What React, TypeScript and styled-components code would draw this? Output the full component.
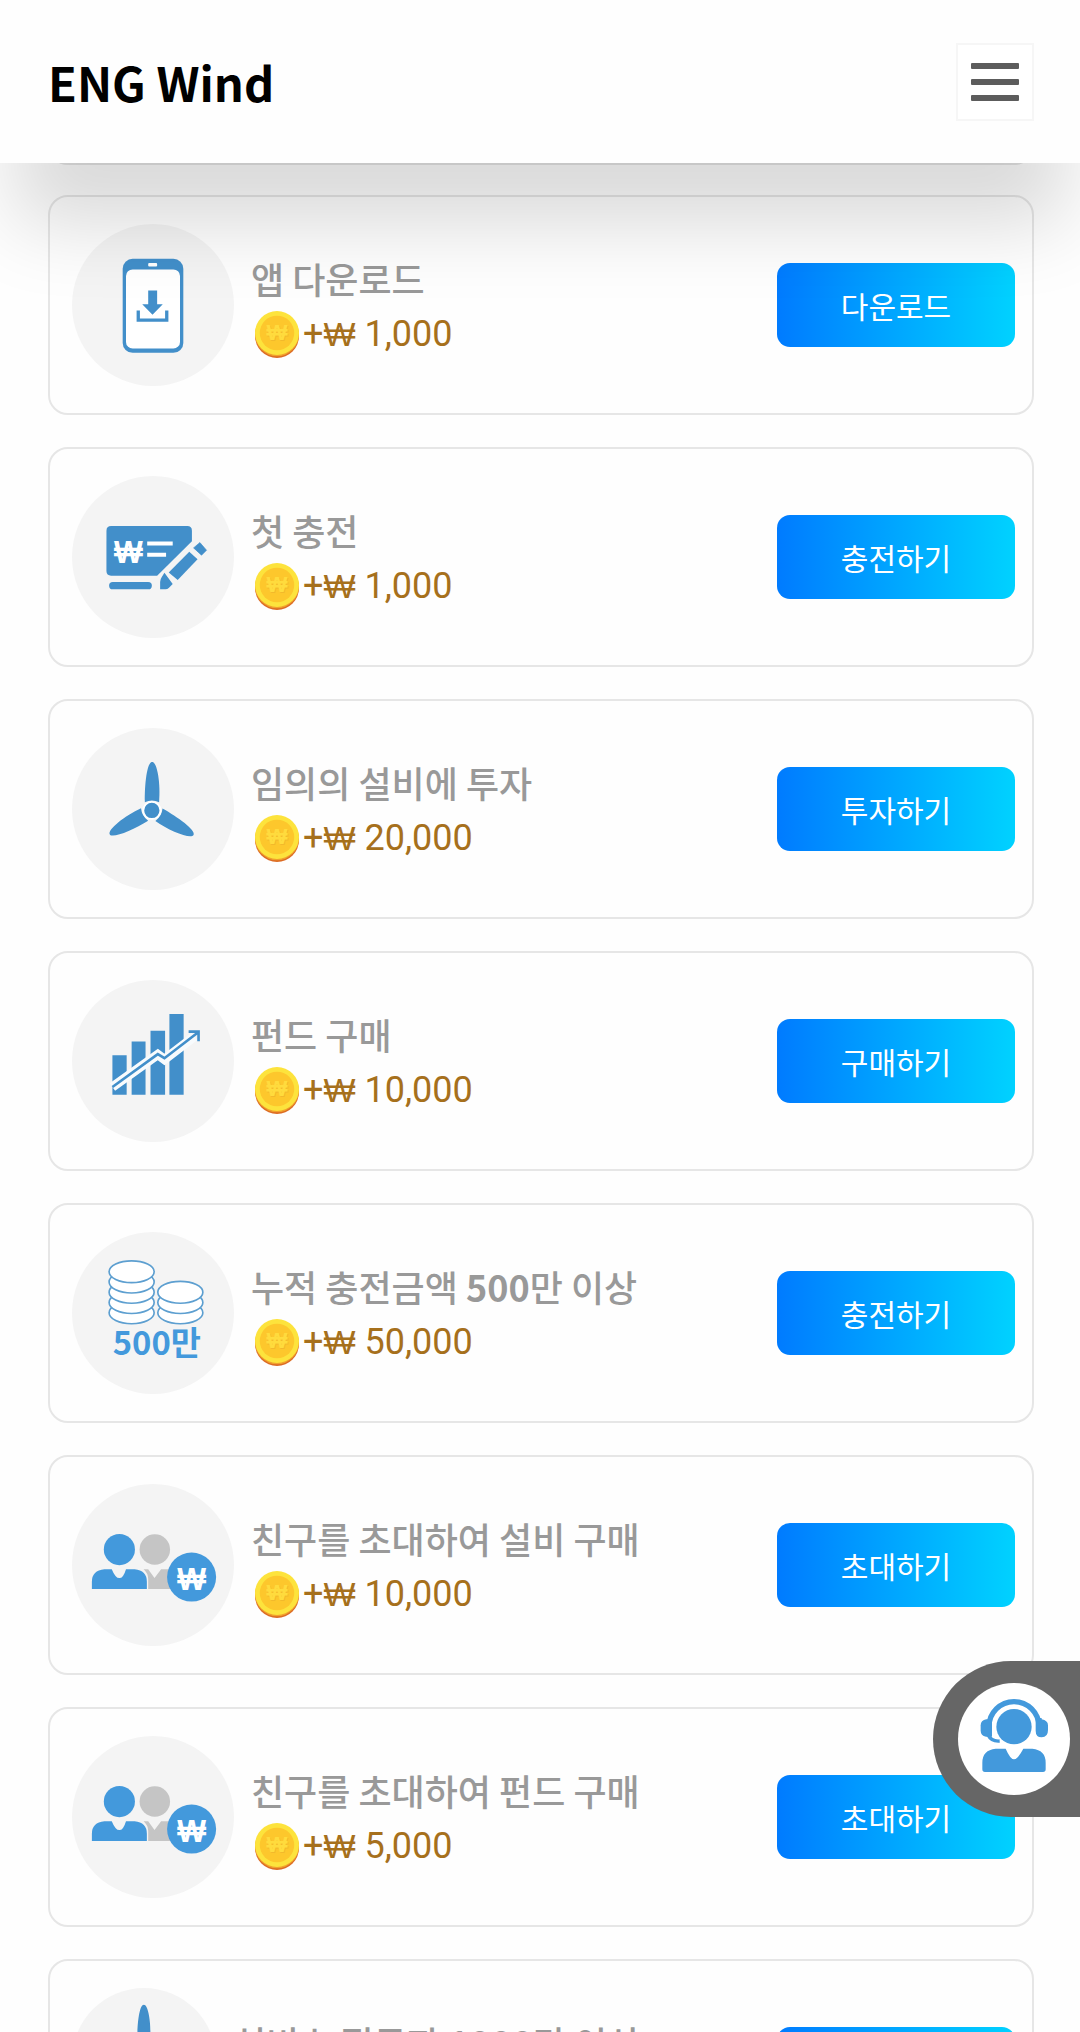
import React from "react";
import styled, { createGlobalStyle } from "styled-components";

const BLUE = "#428fca";
const SKY = "#4399dc";
const PALE = "#f4f4f4";
const kr = `"Noto Sans CJK KR", "Noto Sans", sans-serif`;

const GlobalStyle = createGlobalStyle`
  *, *::before, *::after { box-sizing: border-box; }
  body { margin: 0; background: #fefefe; font-family: ${kr}; }
`;

const Screen = styled.div`
  height: 100vh;
  overflow: hidden;
`;

const Header = styled.header`
  position: relative;
  z-index: 2;
  display: flex;
  align-items: center;
  justify-content: space-between;
  height: 163px;
  padding: 0 46px 0 48px;
  background: #fefefe;
  box-shadow: 0 75px 80px -15px rgba(0, 0, 0, 0.15);
`;

const Brand = styled.h1`
  margin: 0;
  font-size: 47px;
  line-height: 70px;
  font-weight: 700;
  color: #000;
`;

const MenuButton = styled.button`
  display: flex;
  flex-direction: column;
  align-items: center;
  justify-content: center;
  gap: 10px;
  width: 78px;
  height: 78px;
  padding: 0;
  border: 2px solid #f6f6f6;
  background: #fff;
`;

const MenuBar = styled.span`
  width: 48px;
  height: 6px;
  border-radius: 1px;
  background: #5c5c5c;
`;

const ScrolledEdge = styled.div`
  height: 42px;
  margin: -40px 46px 0 48px;
  border: 2px solid #e6e6e6;
  border-radius: 20px;
`;

const TaskList = styled.ul`
  display: flex;
  flex-direction: column;
  gap: 32px;
  margin: 0;
  padding: 30px 46px 32px 48px;
  list-style: none;
`;

const Card = styled.li`
  display: flex;
  align-items: center;
  justify-content: space-between;
  padding: 27px 17px 27px 22px;
  border: 2px solid #e6e6e6;
  border-radius: 20px;
`;

const Info = styled.div`
  display: flex;
  gap: 17px;
  height: 162px;
`;

const IconDisc = styled.svg<{ $small?: boolean }>`
  flex: none;
  width: ${(p) => (p.$small ? 144 : 162)}px;
  height: ${(p) => (p.$small ? 144 : 162)}px;
  border-radius: 50%;
  background: ${PALE};
`;

const Copy = styled.div`
  display: flex;
  flex-direction: column;
  justify-content: center;
`;

const Title = styled.h2`
  margin: 0;
  font-size: 36px;
  line-height: 58px;
  font-weight: 500;
  color: #999;
`;

const Figure = styled.span`
  font-weight: 700;
`;

const Reward = styled.p`
  display: flex;
  align-items: center;
  gap: 4px;
  height: 54px;
  margin: 0;
  padding-left: 4px;
  font-family: Roboto, sans-serif;
  font-size: 36px;
  line-height: 54px;
  color: #a6701c;
`;

const Won = styled.span`
  font-family: "Liberation Sans", sans-serif;
  font-size: 34px;
`;

const CoinArt = styled.svg`
  flex: none;
  width: 44px;
  height: 47px;
`;

const Action = styled.button`
  flex: none;
  width: 238px;
  height: 84px;
  padding: 0;
  border: 0;
  border-radius: 13px;
  background: linear-gradient(90deg, #007bff, #00d2ff);
  font-family: ${kr};
  font-size: 30px;
  line-height: 44px;
  color: #fff;
`;

const Support = styled.button`
  position: fixed;
  right: 0;
  bottom: 215px;
  z-index: 3;
  display: flex;
  align-items: center;
  width: 147px;
  height: 156px;
  padding: 0 0 0 25px;
  border: 0;
  border-radius: 78px 0 0 78px;
  background: #666;
`;

const SupportArt = styled.svg`
  width: 112px;
  height: 112px;
  border-radius: 50%;
  background: #fff;
`;

const WonMark = ({ x, y, size, fill }: { x: number; y: number; size: number; fill: string }) => (
  <text
    x={x}
    y={y}
    fontFamily='"Liberation Sans", sans-serif'
    fontWeight="700"
    fontSize={size}
    textAnchor="middle"
    fill={fill}
  >
    ₩
  </text>
);

const Coin = () => (
  <CoinArt viewBox="0 0 130 139" aria-hidden="true">
    <circle cx="65" cy="74" r="65" fill="#dc6c24" />
    <circle cx="65" cy="69" r="65" fill="#f0a02c" />
    <circle cx="65" cy="65" r="65" fill="#fde33c" />
    <circle cx="65" cy="65" r="51" fill="#fdc72c" />
    <WonMark x={67} y={90} size={66} fill="#f2b92b" />
    <WonMark x={65} y={87} size={66} fill="#ffdb3d" />
  </CoinArt>
);

const PhoneIcon = () => (
  <g>
    <rect x="153" y="105" width="183" height="284" rx="30" fill={BLUE} />
    <rect x="163" y="137" width="163" height="239" rx="20" fill="#fff" />
    <rect x="230" y="118" width="27" height="10" rx="3" fill="#fff" />
    <path d="M230 201h27v41h17l-31 32-31-32h18z" fill={BLUE} />
    <path d="M200 261v29h86v-29" fill="none" stroke={BLUE} strokeWidth="10" />
  </g>
);

const ChequeIcon = () => (
  <g fill={BLUE}>
    <path d="M118 151h230q14 0 14 14v32L257 301H118q-14 0-14-14V165q0-14 14-14z" />
    <rect x="112" y="320" width="129" height="22" rx="11" />
    <path d="M386 201l20 23-15 15-24-22z" strokeLinejoin="round" stroke={BLUE} strokeWidth="2" />
    <path d="M354 229l25 22-60 63-27-23z" />
    <path d="M279 292l25 34-12 12q-4 4-10 4h-16v-22q0-8 5-15z" />
    <path d="M227 204h77M227 238h57" stroke="#fff" strokeWidth="12" />
    <WonMark x={170} y={264} size={92} fill="#fff" />
  </g>
);

const Blades = () => (
  <g fill={BLUE}>
    {[0, 120, 240].map((angle) => (
      <path
        key={angle}
        d="M220 224C219 172 226 103 242 103S268 172 263 224Q241 214 220 224z"
        transform={`rotate(${angle} 241 249)`}
      />
    ))}
    <circle cx="241" cy="249" r="26" stroke="#fff" strokeWidth="6" />
  </g>
);

const RaisedBlades = () => (
  <g transform="translate(2 -46)">
    <Blades />
  </g>
);

const ChartIcon = () => (
  <g>
    <path d="M122 227h43v119h-43zM180 186h42v160h-42zM237 153h44v193h-44zM294 103h43v243h-43z" fill={BLUE} />
    <path d="M122 323L259 225 279 240 370 170" fill="none" stroke="#f8fbfd" strokeWidth="28" />
    <path d="M122 323L259 224 279 236 382 157M352 156h30v29" fill="none" stroke={BLUE} strokeWidth="8" />
  </g>
);

const CoinsIcon = () => (
  <g>
    <g fill="#fff" stroke="#5d9fd0" strokeWidth="5">
      {[244, 213, 182, 151, 120].map((cy) => (
        <ellipse key={cy} cx="180" cy={cy} rx="68" ry="33" />
      ))}
      {[244, 213, 182].map((cy) => (
        <ellipse key={cy} cx="327" cy={cy} rx="68" ry="33" />
      ))}
    </g>
    <text x="256" y="371" fontFamily={kr} fontWeight="700" fontSize="99" textAnchor="middle" fill={SKY}>
      500만
    </text>
  </g>
);

const FriendsIcon = () => (
  <g>
    <g fill="#c5c5c5">
      <circle cx="250" cy="198" r="46" />
      <path d="M216 257h14l19 27 20-27h45v60h-84v-30q0-18-14-30z" />
    </g>
    <g fill={SKY}>
      <circle cx="143" cy="198" r="47" />
      <path d="M98 257h22q11 27 23 27t20-27h26q37 3 37 38v22H60v-22q0-35 38-38z" />
      <circle cx="361" cy="281" r="74" />
    </g>
    <WonMark x={361} y={320} size={92} fill="#fff" />
  </g>
);

const art = {
  phone: PhoneIcon,
  cheque: ChequeIcon,
  turbine: Blades,
  raisedTurbine: RaisedBlades,
  chart: ChartIcon,
  coins: CoinsIcon,
  friends: FriendsIcon,
};

type Task = { icon: keyof typeof art; title: string; reward?: string; action?: string; small?: boolean };

const tasks: Task[] = [
  { icon: "phone", title: "앱 다운로드", reward: "1,000", action: "다운로드" },
  { icon: "cheque", title: "첫 충전", reward: "1,000", action: "충전하기" },
  { icon: "turbine", title: "임의의 설비에 투자", reward: "20,000", action: "투자하기" },
  { icon: "chart", title: "펀드 구매", reward: "10,000", action: "구매하기" },
  { icon: "coins", title: "누적 충전금액 500만 이상", reward: "50,000", action: "충전하기" },
  { icon: "friends", title: "친구를 초대하여 설비 구매", reward: "10,000", action: "초대하기" },
  { icon: "friends", title: "친구를 초대하여 펀드 구매", reward: "5,000", action: "초대하기" },
  { icon: "raisedTurbine", title: "설비 누적투자 1000만 이상", small: true },
];

const TaskCard = ({ icon, title, reward, action, small }: Task) => {
  const Art = art[icon];
  return (
    <Card>
      <Info>
        <IconDisc $small={small} viewBox="0 0 489 489" aria-hidden="true">
          <Art />
        </IconDisc>
        <Copy>
          <Title>
            {title.split(/(\d+)/).map((part, i) => (i % 2 ? <Figure key={i}>{part}</Figure> : part))}
          </Title>
          <Reward>
            {reward && (
              <>
                <Coin />
                <span>
                  +<Won>₩</Won> {reward}
                </span>
              </>
            )}
          </Reward>
        </Copy>
      </Info>
      <Action type="button" aria-label={action ?? title}>
        {action}
      </Action>
    </Card>
  );
};

export default function App() {
  return (
    <>
      <GlobalStyle />
      <Screen>
        <Header>
          <Brand>ENG Wind</Brand>
          <MenuButton type="button" aria-label="메뉴">
            <MenuBar />
            <MenuBar />
            <MenuBar />
          </MenuButton>
        </Header>
        <main>
          <ScrolledEdge />
          <TaskList>
            {tasks.map((task) => (
              <TaskCard key={task.title} {...task} />
            ))}
          </TaskList>
        </main>
        <Support type="button" aria-label="고객센터">
          <SupportArt viewBox="0 0 336 336" aria-hidden="true">
            <g fill={SKY}>
              <path d="M93 131a75 75 0 0 1 150 0" fill="none" stroke={SKY} strokeWidth="16" />
              <path d="M102 109v52H84q-16-3-16-18v-16q0-15 17-18z" />
              <path d="M233 105h18v4q19 4 19 18v14q0 22-19 22-18 0-18-20z" />
              <path d="M90 156q10 20 35 18" fill="none" stroke={SKY} strokeWidth="10" />
              <circle cx="168" cy="131" r="53" />
              <path d="M113 197h30q14 32 25 32t28-32h27q40 4 40 42v20q0 8-8 8H81q-8 0-8-8v-20q0-38 40-42z" />
            </g>
          </SupportArt>
        </Support>
      </Screen>
    </>
  );
}
